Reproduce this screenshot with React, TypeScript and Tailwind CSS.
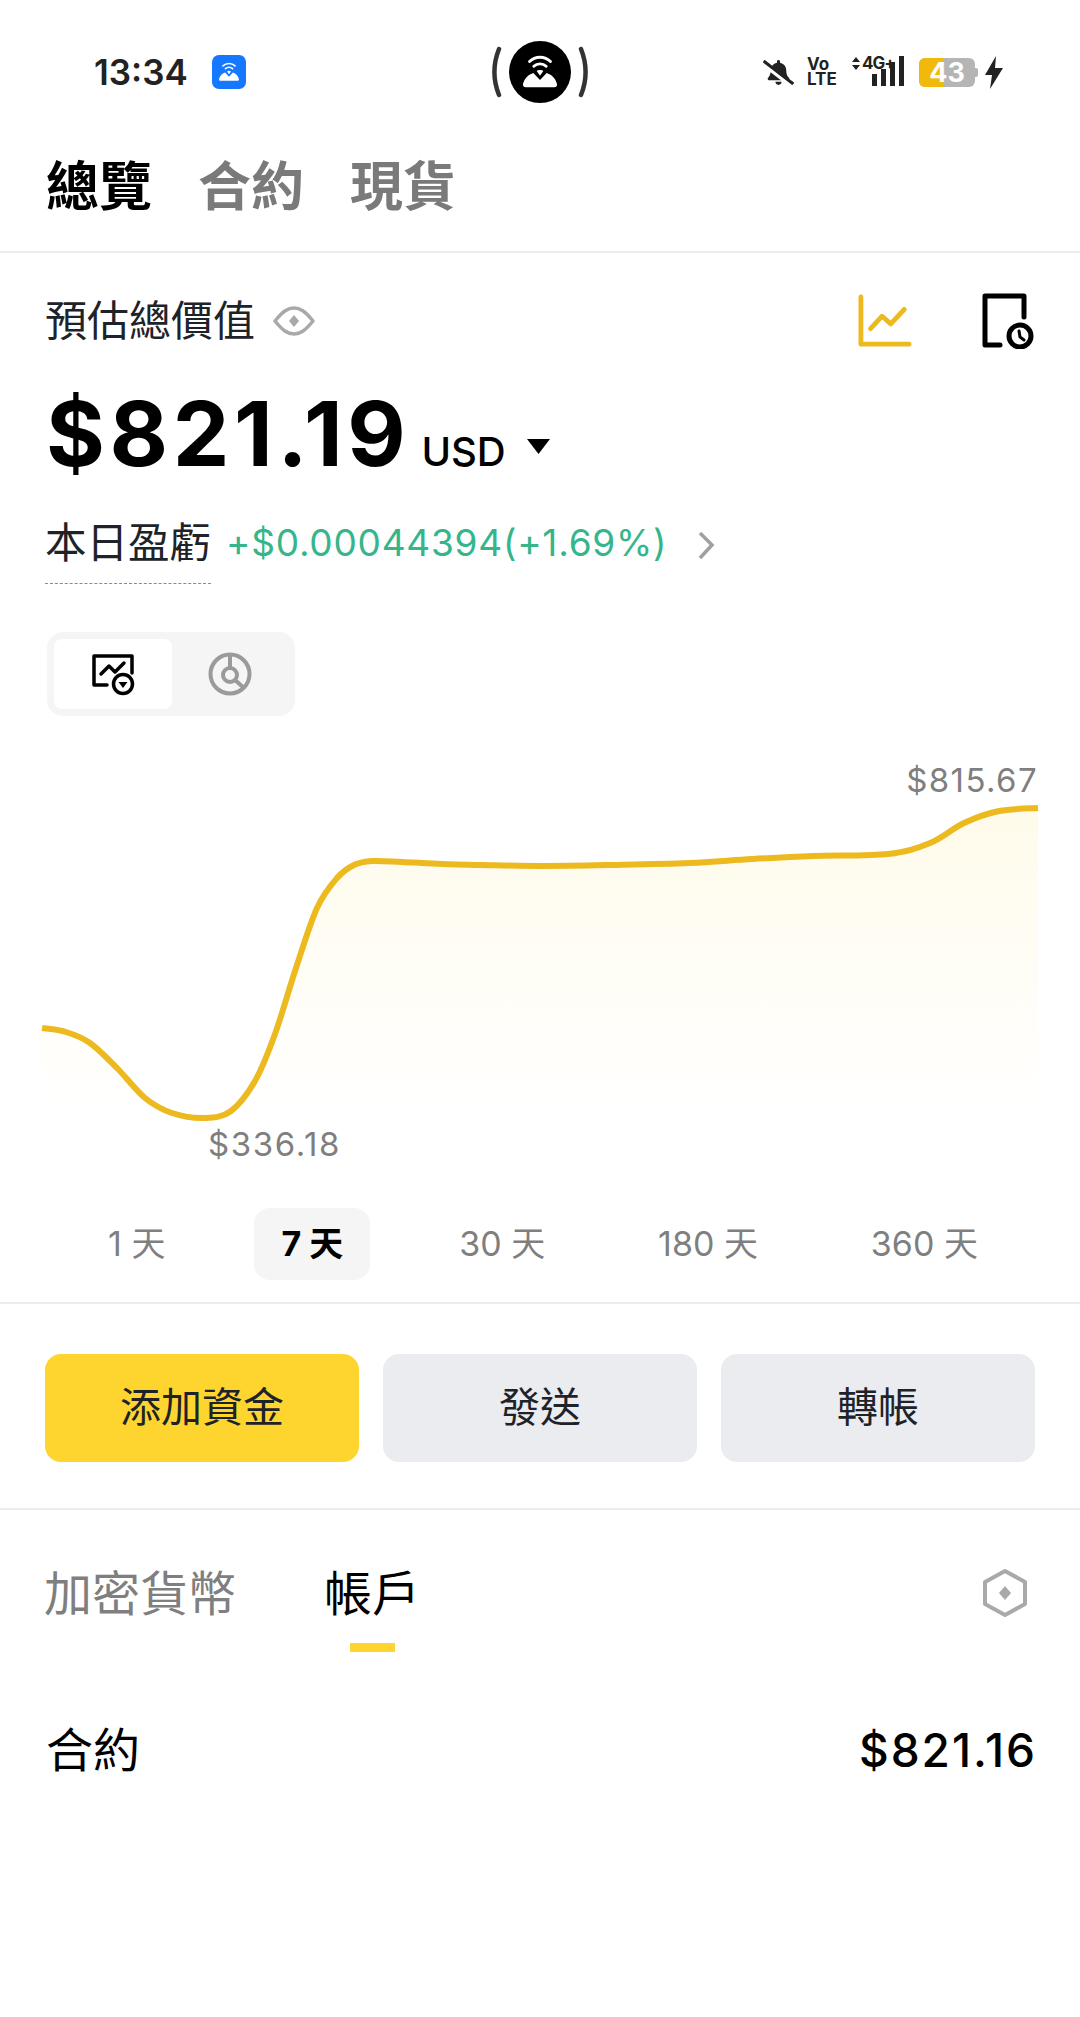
import { FaBellSlash } from "react-icons/fa";

const font = "font-['Inter','Noto_Sans_CJK_TC',sans-serif]";

// line of the chart, read off the picture, in the svg's own pixels
const chartPoints: [number, number][] = [
    [0, 227], [24, 231], [48, 242], [75, 267], [103, 297], [130, 312], [163, 317], [189, 310], [213, 280],
    [233, 233], [254, 167], [275, 107], [295, 77], [312, 64], [330, 60], [360, 61], [400, 63], [440, 64],
    [502, 65], [570, 64], [647, 62], [710, 58], [771, 55], [846, 53], [888, 42], [922, 22], [957, 10], [996, 7],
];

const smoothLine = (pts: [number, number][]) => {
    let d = `M${pts[0][0]} ${pts[0][1]}`;
    for (let i = 0; i < pts.length - 1; i++) {
        const p0 = pts[Math.max(i - 1, 0)];
        const p1 = pts[i];
        const p2 = pts[i + 1];
        const p3 = pts[Math.min(i + 2, pts.length - 1)];
        const c1x = p1[0] + (p2[0] - p0[0]) / 6;
        const c1y = p1[1] + (p2[1] - p0[1]) / 6;
        const c2x = p2[0] - (p3[0] - p1[0]) / 6;
        const c2y = p2[1] - (p3[1] - p1[1]) / 6;
        d += ` C${c1x} ${c1y} ${c2x} ${c2y} ${p2[0]} ${p2[1]}`;
    }
    return d;
};

const chartLine = smoothLine(chartPoints);

const WifiDome = ({ className }: { className?: string }) => (
    <svg viewBox="0 0 40 40" className={className} fill="none">
        <path d="M9 9 C15 3 25 3 31 9" stroke="white" strokeWidth="3" strokeLinecap="round" />
        <path d="M13.5 14 C17 10.5 23 10.5 26.5 14" stroke="white" strokeWidth="3" strokeLinecap="round" />
        <path d="M20 24 L16.5 19 C18 17.5 22 17.5 23.5 19 Z" fill="white" />
        <path d="M13 21 C6 23 3 29 2 33 C2 35 3 36 5 36 H35 C37 36 38 35 38 33 C37 29 34 23 27 21 L20 28.5 Z" fill="white" />
    </svg>
);

const StatusBar = () => (
    <div className="h-[144px] grid grid-cols-3 items-center">
        <div className="flex items-center gap-[24px] pl-[94px]">
            <div className="text-[35px] font-semibold text-[#222222] leading-none">13:34</div>
            <div className="w-[34px] h-[34px] rounded-[7px] bg-[#1677ff] flex items-center justify-center">
                <WifiDome className="w-[22px] h-[22px]" />
            </div>
        </div>

        <div className="flex items-center justify-center gap-[7px]">
            <svg width="12" height="52" viewBox="0 0 12 52" fill="none">
                <path d="M9 3 C3 18 3 34 9 49" stroke="#333333" strokeWidth="4.5" strokeLinecap="round" />
            </svg>
            <div className="w-[62px] h-[62px] rounded-full bg-black flex items-center justify-center">
                <WifiDome className="w-[38px] h-[38px]" />
            </div>
            <svg width="12" height="52" viewBox="0 0 12 52" fill="none">
                <path d="M3 3 C9 18 9 34 3 49" stroke="#333333" strokeWidth="4.5" strokeLinecap="round" />
            </svg>
        </div>

        <div className="flex items-center justify-end pr-[77px] text-[#222222]">
            <FaBellSlash size={"31px"} color={"#222222"} />
            <div className="ml-[13px] w-[29px] text-[17px] font-bold leading-[15px]">
                <div>Vo</div>
                <div>LTE</div>
            </div>
            <div className="relative ml-[16px] w-[52px] h-[32px]">
                <svg width="52" height="32" viewBox="0 0 52 32" className="block">
                    <path d="M0 6 L4 1 L8 6 Z M0 9 L4 14 L8 9 Z" fill="#222222" />
                    <rect x="20" y="18" width="5" height="12" fill="#222222" />
                    <rect x="29" y="13" width="5" height="17" fill="#222222" />
                    <rect x="38" y="6" width="5" height="24" fill="#222222" />
                    <rect x="47" y="0" width="5" height="30" fill="#222222" />
                </svg>
                <div className="absolute left-[10px] top-[-2px] text-[17px] font-bold leading-[18px] tracking-[-1px]">4G+</div>
            </div>
            <div className="relative ml-[15px] w-[56px] h-[29px] rounded-[6px] bg-[#b5b5b5] flex items-center justify-center">
                <div className="absolute left-0 top-0 bottom-0 w-[25px] rounded-l-[6px] bg-[#f0b90b]" />
                <div className="absolute right-[-3px] top-[10px] w-[3px] h-[9px] rounded-r-[2px] bg-[#b5b5b5]" />
                <div className="relative text-[27px] font-bold text-white leading-none">43</div>
            </div>
            <svg width="18" height="33" viewBox="0 0 18 33" className="ml-[10px]">
                <path d="M11 0 L0 19 H7 L5 33 L18 12 H10 Z" fill="#222222" />
            </svg>
        </div>
    </div>
);

const TopTabs = () => (
    <div className="h-[109px] flex gap-[46px] pl-[46px] border-b-2 border-[#eaecef] text-[53px] leading-[86px] font-bold text-[#7a7a7a]">
        <div className="text-black">總覽</div>
        <div>合約</div>
        <div>現貨</div>
    </div>
);

const EyeIcon = () => (
    <svg width="42" height="30" viewBox="0 0 42 30" fill="none">
        <path d="M2 15 C10 5 15 2 21 2 C27 2 32 5 40 15 C32 25 27 28 21 28 C15 28 10 25 2 15 Z" stroke="#a9a9a9" strokeWidth="3.5" strokeLinejoin="round" />
        <path d="M21 9 L26 15 L21 21 L16 15 Z" fill="#a9a9a9" />
    </svg>
);

const BalanceSection = () => (
    <div className="px-[46px]">
        <div className="flex items-center justify-between h-[60px] mt-[38px]">
            <div className="flex items-center gap-[18px] -ml-px">
                <div className="text-[42px] text-[#1e2329] leading-none">預估總價值</div>
                <EyeIcon />
            </div>
            <div className="flex items-center gap-[70px]">
                <svg width="54" height="54" viewBox="0 0 56 56" fill="none">
                    <path d="M3 3 V52 H53" stroke="#ecb91f" strokeWidth="5" strokeLinecap="round" strokeLinejoin="round" />
                    <path d="M13 36 L25 23 L34 31 L48 16" stroke="#ecb91f" strokeWidth="5" strokeLinecap="round" strokeLinejoin="round" />
                </svg>
                <svg width="52" height="56" viewBox="0 0 52 56" fill="none">
                    <path d="M18 52 H3 V3 H42 V24" stroke="black" strokeWidth="5" strokeLinecap="round" strokeLinejoin="round" />
                    <circle cx="38" cy="43" r="11" stroke="black" strokeWidth="5" />
                    <path d="M37 38 L38 44 L42 47" stroke="black" strokeWidth="3" strokeLinecap="round" />
                </svg>
            </div>
        </div>

        <div className="flex items-baseline mt-[34px] h-[98px]">
            <div className="text-[90px] font-bold text-black leading-[98px] tracking-[4.6px]">$821.19</div>
            <div className="ml-[11px] text-[40px] text-black font-medium leading-none">USD</div>
            <svg width="23" height="15" viewBox="0 0 23 15" className="ml-[21px] -translate-y-[12px]">
                <path d="M0 0 H23 L11.5 15 Z" fill="black" />
            </svg>
        </div>

        <div className="flex items-start mt-[35px]">
            <div className="h-[66px] -ml-px border-b border-dashed border-[#8a8a8a] text-[41.5px] leading-[50px] text-[#1e2329]">本日盈虧</div>
            <div className="ml-[15px] text-[37px] leading-[50px] text-[#36b58b] tracking-[0.75px]">+$0.00044394(+1.69%)</div>
            <svg width="18" height="30" viewBox="0 0 18 30" fill="none" className="ml-[30px] mt-[12px]">
                <path d="M3 3 L15 15 L3 28" stroke="#a0a0a0" strokeWidth="3.5" />
            </svg>
        </div>
    </div>
);

const ChartToggle = () => (
    <div className="ml-[47px] mt-[48px] w-[248px] h-[84px] rounded-[16px] bg-[#f5f5f5] p-[7px] flex">
        <div className="w-[118px] h-[70px] bg-white rounded-[8px] flex items-center justify-center">
            <svg width="44" height="44" viewBox="0 0 44 44" fill="none">
                <path d="M16 33 H3 V4 H41 V21" stroke="black" strokeWidth="3.5" strokeLinecap="round" strokeLinejoin="round" />
                <path d="M10 22 L18 14 L24 20 L33 11" stroke="black" strokeWidth="3.5" strokeLinecap="round" strokeLinejoin="round" />
                <circle cx="32" cy="32" r="9.5" stroke="black" strokeWidth="3.5" />
                <path d="M27.5 30 H36.5 L32 36 Z" fill="black" />
            </svg>
        </div>
        <div className="flex-1 flex items-center justify-center">
            <svg width="44" height="44" viewBox="0 0 44 44" fill="none">
                <circle cx="22" cy="22" r="19.5" stroke="#9a9a9a" strokeWidth="4" />
                <circle cx="22" cy="23" r="7" stroke="#9a9a9a" strokeWidth="4" />
                <path d="M22 3 V16 M27 28 L36 36" stroke="#9a9a9a" strokeWidth="4" />
            </svg>
        </div>
    </div>
);

const Chart = () => (
    <div className="relative mx-[42px] mt-[85px] h-[370px]">
        <svg viewBox="0 0 996 330" width="996" height="330" className="block overflow-visible" fill="none">
            <defs>
                <linearGradient id="chartFill" x1="0" y1="0" x2="0" y2="1">
                    <stop offset="0" stopColor="#fcd535" stopOpacity="0.1" />
                    <stop offset="1" stopColor="#fcd535" stopOpacity="0" />
                </linearGradient>
            </defs>
            <path d={`${chartLine} V305 H0 Z`} fill="url(#chartFill)" />
            <path d={chartLine} stroke="#ecb91f" strokeWidth="6" />
        </svg>
        <div className="absolute right-0 top-[-41px] text-[33px] leading-[40px] text-[#7f7f7f] tracking-[1.4px]">$815.67</div>
        <div className="absolute left-[166px] top-[323px] text-[33px] leading-[40px] text-[#7f7f7f] tracking-[1.6px]">$336.18</div>
    </div>
);

const RangeTabs = () => (
    <div className="flex justify-between pl-[84px] pr-[78px] mt-[37px] h-[72px] text-[34px] leading-[72px] text-[#7f7f7f]">
        <div className="px-[24px]">1 天</div>
        <div className="w-[116px] text-center bg-[#f5f5f5] rounded-[16px] font-bold text-black">7 天</div>
        <div className="px-[24px]">30 天</div>
        <div className="px-[24px]">180 天</div>
        <div className="px-[24px]">360 天</div>
    </div>
);

const Actions = () => (
    <div className="mt-[22px] border-y-2 border-[#eaecef] pt-[50px] pb-[46px] px-[45px] grid grid-cols-3 gap-[24px] text-[41px] text-[#1e2329]">
        <div className="h-[108px] rounded-[16px] bg-[#fed52f] flex items-center justify-center">添加資金</div>
        <div className="h-[108px] rounded-[16px] bg-[#eaecef] flex items-center justify-center">發送</div>
        <div className="h-[108px] rounded-[16px] bg-[#eaecef] flex items-center justify-center">轉帳</div>
    </div>
);

const AccountTabs = () => (
    <div className="flex justify-between pl-[44px] pr-[52px] mt-[48px]">
        <div className="flex gap-[88px] text-[48px] leading-[72px] text-[#7f7f7f]">
            <div>加密貨幣</div>
            <div className="flex flex-col items-center text-black">
                <div>帳戶</div>
                <div className="mt-[13px] w-[45px] h-[9px] bg-[#fed52f]" />
            </div>
        </div>
        <svg width="46" height="50" viewBox="0 0 46 50" fill="none" className="mt-[10px]">
            <path d="M23 3 L43 14 V36 L23 47 L3 36 V14 Z" stroke="#a9a9a9" strokeWidth="4" strokeLinejoin="round" />
            <path d="M23 18 L29 25 L23 32 L17 25 Z" fill="#a9a9a9" />
        </svg>
    </div>
);

const AccountRow = () => (
    <div className="flex justify-between items-center pl-[46px] pr-[43px] mt-[68px] text-black">
        <div className="text-[47px] leading-[60px]">合約</div>
        <div className="text-[46px] leading-[60px] font-medium tracking-[2px]">$821.16</div>
    </div>
);

export default function App() {
    return (
        <div className={`w-[1080px] min-h-[2017px] bg-white overflow-hidden ${font}`}>
            <StatusBar />
            <TopTabs />
            <BalanceSection />
            <ChartToggle />
            <Chart />
            <RangeTabs />
            <Actions />
            <AccountTabs />
            <AccountRow />
        </div>
    );
}
